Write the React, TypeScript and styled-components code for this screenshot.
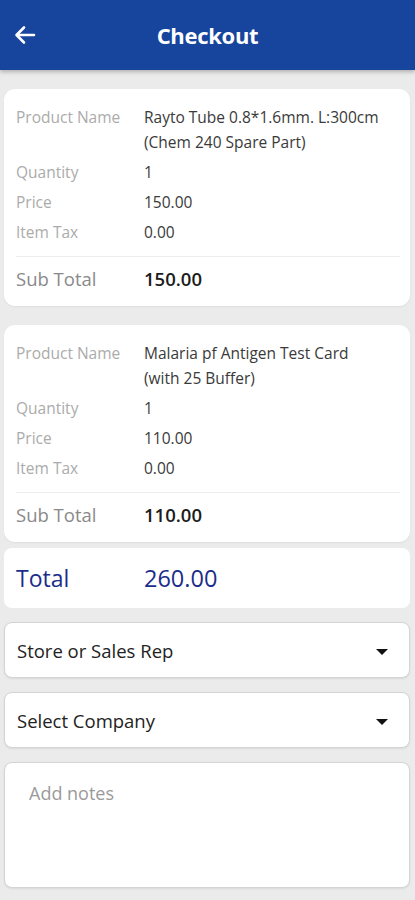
import React from "react";
import styled, { createGlobalStyle } from "styled-components";

const GlobalStyle = createGlobalStyle`
  body {
    margin: 0;
    background: #ebebeb;
    font-family: "Open Sans", "Noto Sans", sans-serif;
  }
`;

const Page = styled.div`
  display: flex;
  flex-direction: column;
  min-height: 900px;
  background: #ebebeb;
`;

const Header = styled.div`
  height: 70px;
  background: #17449c;
  display: flex;
  align-items: center;
  box-shadow: 0 2px 4px rgba(0, 0, 0, 0.25);
`;

const BackButton = styled.div`
  width: 50px;
  display: flex;
  justify-content: center;
`;

const Title = styled.h1`
  flex: 1;
  margin: 0 50px 0 0;
  text-align: center;
  color: #fff;
  font-size: 22px;
  font-weight: 700;
  letter-spacing: -0.3px;
`;

const Content = styled.div`
  padding: 19px 5px 12px 4px;
  display: flex;
  flex-direction: column;
`;

const Card = styled.div<{ $gap?: number }>`
  background: #fff;
  border-radius: 11px;
  padding: 16px 10px 12px 12px;
  margin-bottom: ${(p) => p.$gap ?? 0}px;
  box-shadow: 0 1px 2px rgba(0, 0, 0, 0.06);
`;

const Row = styled.div<{ $lh?: number }>`
  display: grid;
  grid-template-columns: 128px 1fr;
  font-size: 15.5px;
  line-height: ${(p) => p.$lh ?? 30}px;
`;

const Label = styled.div`
  color: #ababab;
`;

const Value = styled.div`
  color: #3a3a3a;
`;

const NameRow = styled(Row)`
  margin-bottom: 2px;
`;

const Divider = styled.div`
  height: 1px;
  background: #eeeeee;
  margin: 9px 0 7px;
`;

const SubRow = styled.div`
  display: grid;
  grid-template-columns: 128px 1fr;
  font-size: 18.5px;
  line-height: 30px;
`;

const SubLabel = styled.div`
  color: #8a8a8a;
`;

const SubValue = styled.div`
  color: #1c1c1c;
  font-weight: 600;
`;

const TotalCard = styled.div`
  background: #fff;
  border-radius: 8px;
  height: 60px;
  padding: 0 12px;
  display: grid;
  grid-template-columns: 128px 1fr;
  align-items: center;
  margin-bottom: 14px;
  color: #1b2d8a;
  font-size: 23px;
`;

const TotalValue = styled.div`
  font-weight: 500;
  font-size: 23.5px;
`;

const Select = styled.div`
  height: 54px;
  background: #fff;
  border: 1px solid #d4d4d4;
  border-radius: 8px;
  box-shadow: 0 1px 2px rgba(0, 0, 0, 0.08);
  display: flex;
  align-items: center;
  justify-content: space-between;
  padding: 0 21px 0 12px;
  margin-bottom: 14px;
  font-size: 18.5px;
  color: #222;
`;

const Caret = styled.div`
  width: 0;
  height: 0;
  margin-top: 3px;
  border-left: 6px solid transparent;
  border-right: 6px solid transparent;
  border-top: 6px solid #111;
`;

const Notes = styled.textarea`
  height: 126px;
  box-sizing: border-box;
  resize: none;
  background: #fff;
  border: 1px solid #d4d4d4;
  border-radius: 8px;
  box-shadow: 0 1px 2px rgba(0, 0, 0, 0.08);
  padding: 19px 24px;
  font-family: "Open Sans", "Noto Sans", sans-serif;
  font-size: 18px;
  line-height: 22px;
  color: #222;
  &::placeholder {
    color: #9a9a9a;
  }
`;

type Item = {
  name: string[];
  qty: string;
  price: string;
  tax: string;
  sub: string;
};

const items: Item[] = [
  {
    name: ["Rayto Tube 0.8*1.6mm. L:300cm", "(Chem 240 Spare Part)"],
    qty: "1",
    price: "150.00",
    tax: "0.00",
    sub: "150.00",
  },
  {
    name: ["Malaria pf Antigen Test Card", "(with 25 Buffer)"],
    qty: "1",
    price: "110.00",
    tax: "0.00",
    sub: "110.00",
  },
];

function ItemCard({ item, gap }: { item: Item; gap: number }) {
  return (
    <Card $gap={gap}>
      <NameRow $lh={25}>
        <Label>Product Name</Label>
        <Value>
          {item.name.map((line) => (
            <div key={line}>{line}</div>
          ))}
        </Value>
      </NameRow>
      <Row>
        <Label>Quantity</Label>
        <Value>{item.qty}</Value>
      </Row>
      <Row>
        <Label>Price</Label>
        <Value>{item.price}</Value>
      </Row>
      <Row>
        <Label>Item Tax</Label>
        <Value>{item.tax}</Value>
      </Row>
      <Divider />
      <SubRow>
        <SubLabel>Sub Total</SubLabel>
        <SubValue>{item.sub}</SubValue>
      </SubRow>
    </Card>
  );
}

export default function App() {
  return (
    <Page>
      <GlobalStyle />
      <Header>
        <BackButton>
          <svg width="22" height="20" viewBox="0 0 22 20" fill="none">
            <path
              d="M20 10H3M10 2.5L2.5 10L10 17.5"
              stroke="#fff"
              strokeWidth="2.6"
              strokeLinecap="round"
              strokeLinejoin="round"
            />
          </svg>
        </BackButton>
        <Title>Checkout</Title>
      </Header>
      <Content>
        <ItemCard item={items[0]} gap={19} />
        <ItemCard item={items[1]} gap={6} />
        <TotalCard>
          <div>Total</div>
          <TotalValue>260.00</TotalValue>
        </TotalCard>
        <Select>
          <span>Store or Sales Rep</span>
          <Caret />
        </Select>
        <Select>
          <span>Select Company</span>
          <Caret />
        </Select>
        <Notes placeholder="Add notes" />
      </Content>
    </Page>
  );
}
